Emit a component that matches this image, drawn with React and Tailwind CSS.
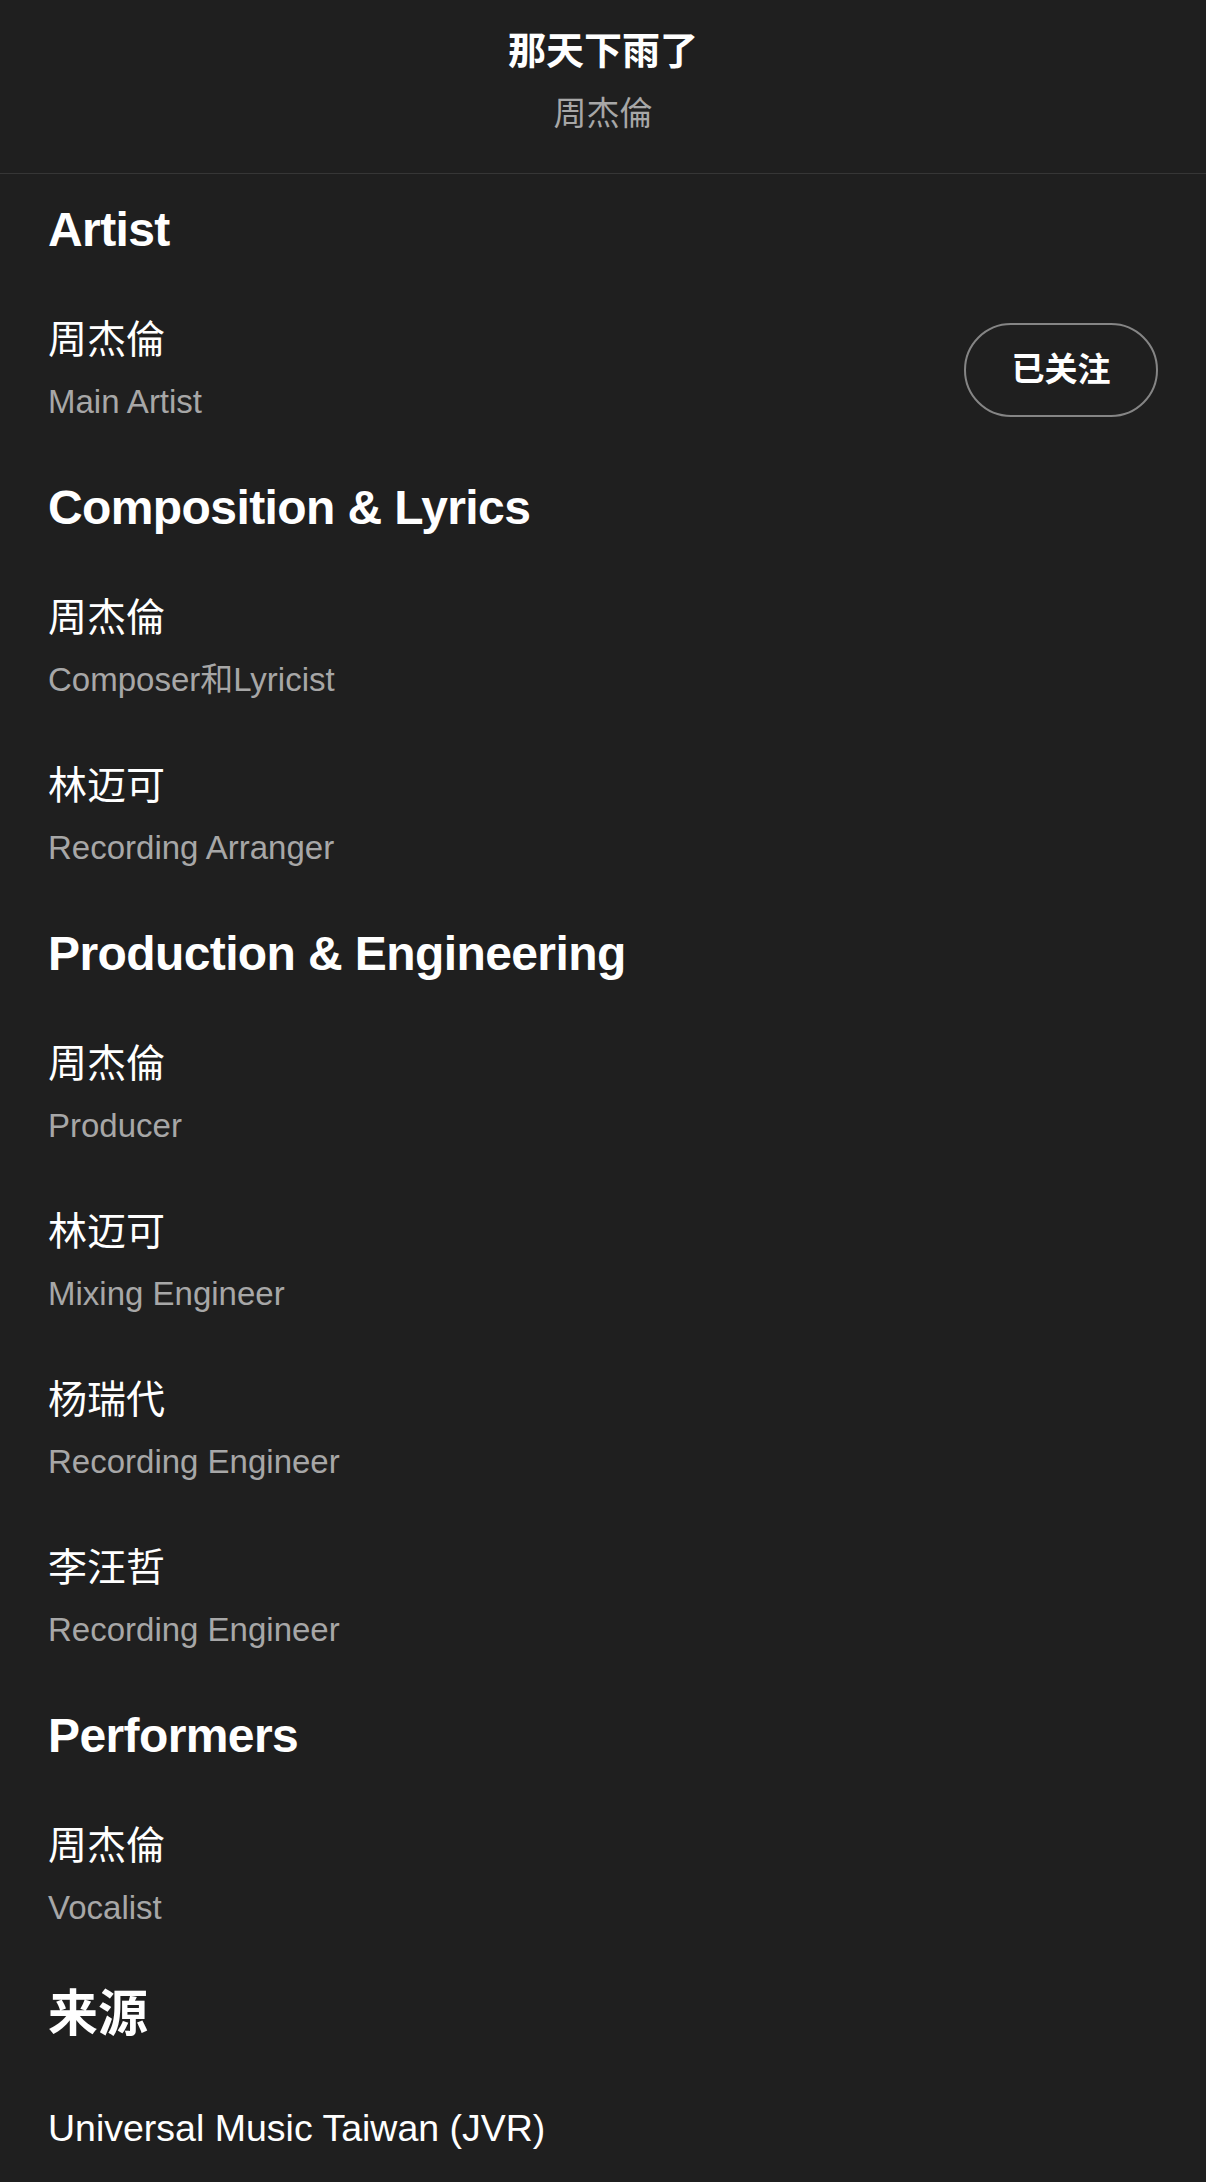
const sections = [
  {
    title: 'Artist',
    rows: [{ name: '周杰倫', role: 'Main Artist', follow: true }],
  },
  {
    title: 'Composition & Lyrics',
    rows: [
      { name: '周杰倫', role: 'Composer和Lyricist' },
      { name: '林迈可', role: 'Recording Arranger' },
    ],
  },
  {
    title: 'Production & Engineering',
    rows: [
      { name: '周杰倫', role: 'Producer' },
      { name: '林迈可', role: 'Mixing Engineer' },
      { name: '杨瑞代', role: 'Recording Engineer' },
      { name: '李汪哲', role: 'Recording Engineer' },
    ],
  },
  {
    title: 'Performers',
    rows: [{ name: '周杰倫', role: 'Vocalist' }],
  },
];

const font = "font-['Liberation_Sans','Noto_Sans_CJK_SC',sans-serif]";

function Heading({ children, cjk }) {
  return (
    <div className="pt-[28px] pb-[26px]">
      <h2
        className={`leading-[56px] font-bold text-white ${
          cjk ? 'text-[50px]' : 'text-[48px] tracking-[-0.6px]'
        }`}
      >
        {children}
      </h2>
    </div>
  );
}

function CreditRow({ name, role, follow }) {
  return (
    <div className="flex items-center justify-between pt-[32px] pb-[28px]">
      <div className="flex flex-col">
        <div className="text-[39px] leading-[48px] text-white">{name}</div>
        <div className="mt-[16px] text-[33px] leading-[44px] text-[#a7a7a7]">{role}</div>
      </div>
      {follow && (
        <button className="w-[194px] h-[94px] rounded-full border-2 border-[#858585] text-white text-[33px] font-bold flex items-center justify-center">
          已关注
        </button>
      )}
    </div>
  );
}

export default function App() {
  return (
    <div className={`min-h-[2182px] w-[1206px] bg-[#1f1f1f] ${font}`}>
      {/* Header */}
      <div className="flex flex-col items-center pt-[27px] pb-[37px] border-b border-[#363636]">
        <div className="text-[38px] leading-[48px] font-bold text-white">那天下雨了</div>
        <div className="mt-[17px] text-[33px] leading-[44px] text-[#a7a7a7]">周杰倫</div>
      </div>

      <div className="px-12">
        {sections.map(section => (
          <div key={section.title}>
            <Heading>{section.title}</Heading>
            {section.rows.map((row, i) => (
              <CreditRow key={i} {...row} />
            ))}
          </div>
        ))}

        {/* Source */}
        <Heading cjk>来源</Heading>
        <div className="pt-[36px] text-[37.5px] leading-[48px] text-white">
          Universal Music Taiwan (JVR)
        </div>
      </div>
    </div>
  );
}
